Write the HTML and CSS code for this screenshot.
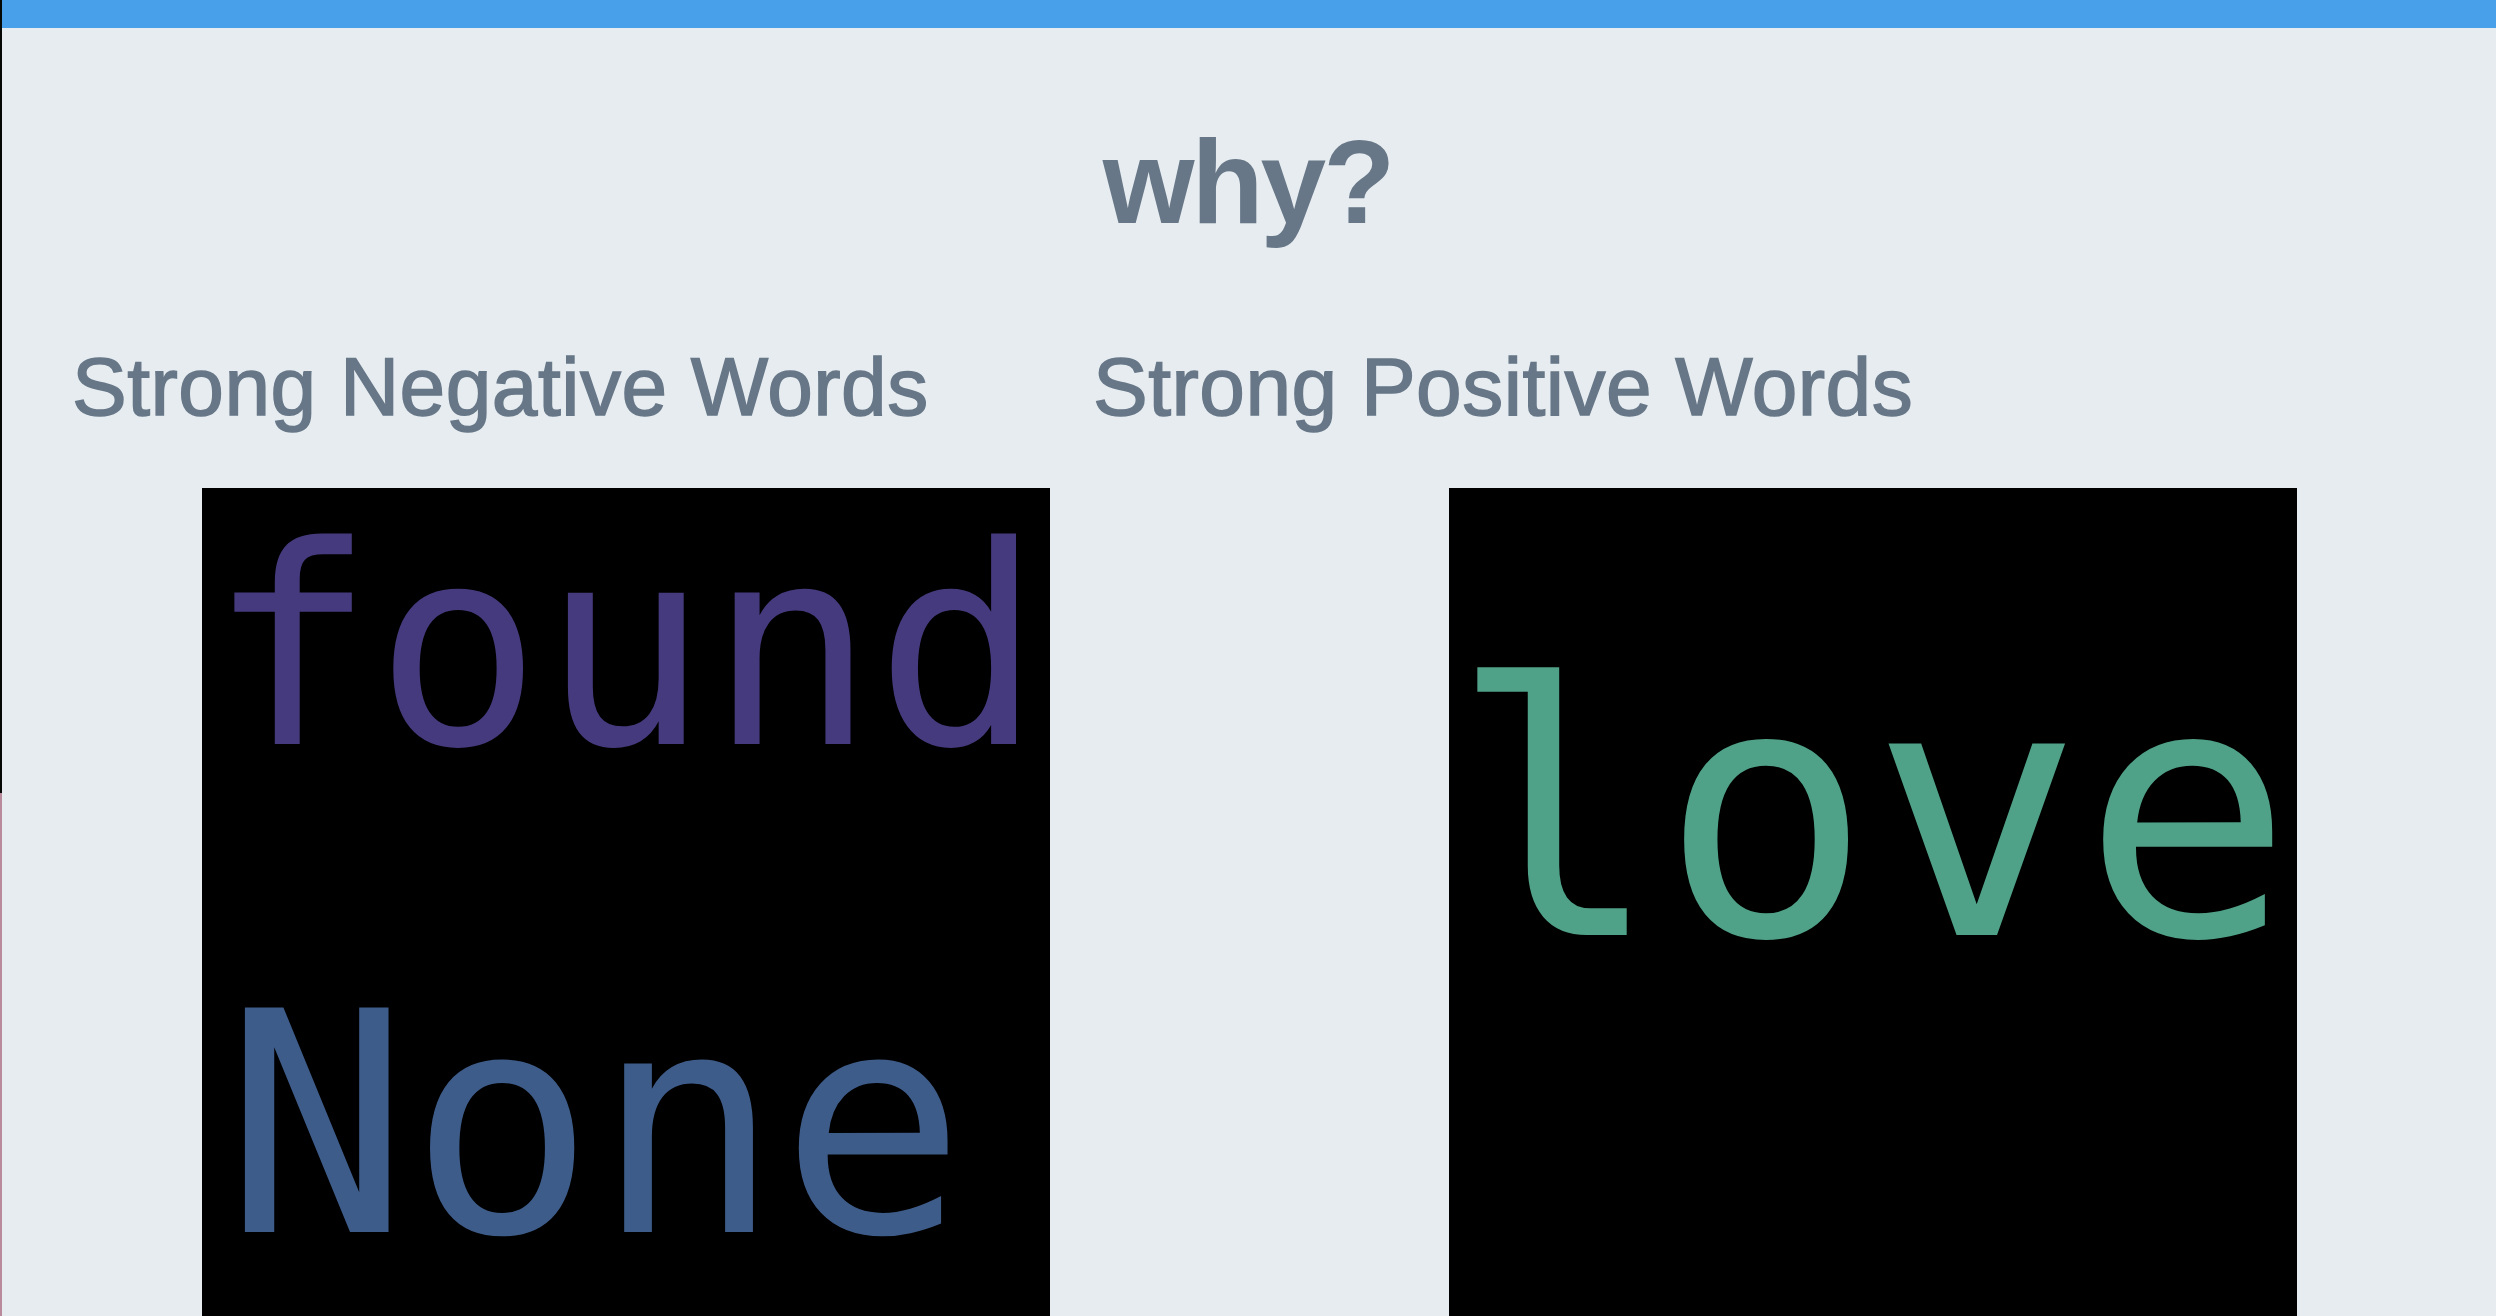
FILE: index.html
```
<!DOCTYPE html>
<html>
<head>
<meta charset="utf-8">
<title>why?</title>
<link rel="stylesheet" href="styles.css">
</head>
<body>
<div class="edge"></div>
<div class="main">
  <div class="topbar"></div>
  <h1 class="title">why?</h1>
  <div class="headers">
    <h2 class="subtitle">Strong Negative Words</h2>
    <h2 class="subtitle">Strong Positive Words</h2>
  </div>
  <div class="clouds">
    <div class="cloud-col">
      <svg class="cloud" viewBox="0 0 848 848" width="848" height="848">
        <rect width="848" height="848" fill="#000"/>
        <text class="word" x="6" y="256" font-size="277" fill="#463a7e">found</text>
        <text class="word" x="22" y="744" font-size="308" fill="#3e5c8a">None</text>
      </svg>
    </div>
    <div class="cloud-col">
      <svg class="cloud" viewBox="0 0 848 848" width="848" height="848">
        <rect width="848" height="848" fill="#000"/>
        <text class="word" x="1" y="447" font-size="350" fill="#4fa187">love</text>
      </svg>
    </div>
  </div>
</div>
</body>
</html>
```
FILE: styles.css
```
html, body {
  margin: 0;
  padding: 0;
  height: 100%;
}
body {
  display: flex;
  background: #e6ecef;
  overflow: hidden;
  font-family: "Liberation Sans", Arial, sans-serif;
  color: #677788;
}
.edge {
  width: 2px;
  flex: 0 0 2px;
  background: linear-gradient(to bottom, #050805 0, #050805 793px, #b98a9c 793px, #b98a9c 100%);
}
.main {
  flex: 1;
  min-width: 0;
  overflow: hidden;
}
.topbar {
  height: 28px;
  background: #49a0ea;
}
.title {
  margin: 95px 0 0 0;
  font-size: 118px;
  line-height: 1;
  font-weight: bold;
  text-align: center;
  letter-spacing: -3px;
  text-indent: -3px;
}
.headers {
  display: grid;
  grid-template-columns: 1021px auto;
  padding-left: 70px;
  margin-top: 105px;
}
.subtitle {
  margin: 0;
  font-size: 82px;
  line-height: 1;
  font-weight: normal;
  letter-spacing: 0.5px;
  white-space: nowrap;
  -webkit-text-stroke: 1.5px #677788;
}
.clouds {
  display: grid;
  grid-template-columns: 1fr 1fr;
  margin-top: 60px;
}
.cloud-col {
  display: flex;
  justify-content: center;
}
.cloud {
  display: block;
  width: 848px;
  height: 848px;
}
.word {
  font-family: "DejaVu Sans Mono", "Liberation Mono", monospace;
}
```
